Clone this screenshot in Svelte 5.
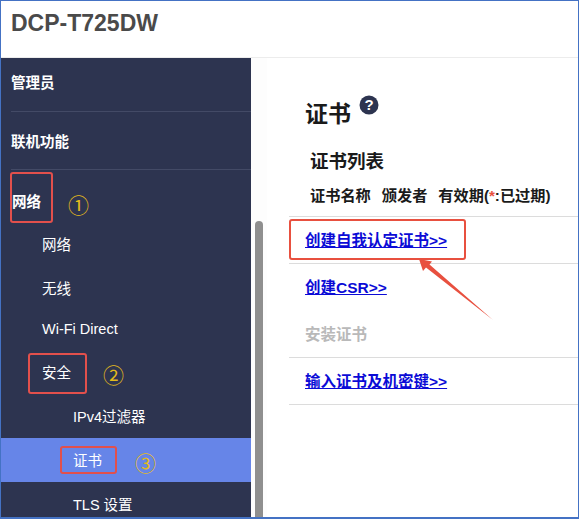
<script>
	const navItems = [
		{ label: '网络', level: 1, height: 44 },
		{ label: '无线', level: 1, height: 44 },
		{ label: 'Wi-Fi Direct', level: 1, height: 40 },
		{ label: '安全', level: 1, height: 44, mark: 'security' },
		{ label: 'IPv4过滤器', level: 2, height: 44 },
		{ label: '证书', level: 2, height: 44, active: true, mark: 'cert' },
		{ label: 'TLS 设置', level: 2, height: 44 }
	];

	const certRows = [
		{ label: '创建自我认定证书>>', link: true, callout: true },
		{ label: '创建CSR>>', link: true, noLine: true },
		{ label: '安装证书', link: false },
		{ label: '输入证书及机密键>>', link: true }
	];
</script>

<div class="frame">
	<header>
		<h1 class="model">DCP-T725DW</h1>
	</header>

	<div class="body">
		<nav>
			<div class="top-item ruled admin">管理员</div>
			<div class="top-item ruled">联机功能</div>
			<div class="top-item network">
				<span class="marked">
					网络
					<span class="box box-network"></span>
					<span class="num num-1">①</span>
				</span>
			</div>
			{#each navItems as item}
				<div
					class="nav-item"
					class:sub={item.level === 2}
					class:active={item.active}
					style="height: {item.height}px"
				>
					<span class="marked">
						{item.label}
						{#if item.mark === 'security'}
							<span class="box box-security"></span>
							<span class="num num-2">②</span>
						{:else if item.mark === 'cert'}
							<span class="box box-cert"></span>
							<span class="num num-3">③</span>
						{/if}
					</span>
				</div>
			{/each}
		</nav>

		<div class="track"><div class="thumb"></div></div>

		<main>
			<div class="title">
				<h2>证书</h2>
				<svg class="help" width="20" height="20" viewBox="0 0 20 20" aria-label="帮助">
					<circle cx="10" cy="10" r="9.5" fill="#2d3450" />
					<text x="10" y="15" text-anchor="middle" class="help-mark">?</text>
				</svg>
			</div>
			<h3>证书列表</h3>
			<div class="columns">
				<span>证书名称</span>
				<span>颁发者</span>
				<span>有效期(<i>*</i>:已过期)</span>
			</div>
			<div class="rows">
				{#each certRows as row}
					<div class="row" class:no-line={row.noLine}>
						{#if row.link}
							<a href="#top">{row.label}</a>
						{:else}
							<span class="disabled">{row.label}</span>
						{/if}
						{#if row.callout}
							<span class="box box-callout"></span>
							<svg class="arrow" width="80" height="64" viewBox="0 0 80 64">
								<path d="M2 1 L15 3.5 L12.5 6.5 L76 62 L9 9.5 L6 13 Z" fill="#e8503f" />
							</svg>
						{/if}
					</div>
				{/each}
			</div>
		</main>
	</div>
</div>

<style>
	:global(body) {
		margin: 0;
		background: #fff;
	}

	.frame {
		box-sizing: border-box;
		width: 579px;
		height: 519px;
		border: 1px solid #4472c4;
		border-bottom-width: 2px;
		overflow: hidden;
		font-family: 'Liberation Sans', 'Noto Sans CJK SC', sans-serif;
		display: flex;
		flex-direction: column;
	}

	header {
		height: 57px;
		flex: none;
		border-bottom: 1px solid #ececec;
		box-sizing: border-box;
		padding: 9px 0 0 10px;
	}
	.model {
		margin: 0;
		font-size: 23px;
		line-height: 26px;
		font-weight: 700;
		color: #4a4a4a;
	}

	.body {
		flex: 1;
		display: flex;
		min-height: 0;
	}

	nav {
		width: 250px;
		flex: none;
		background: #2d3450;
		color: #fff;
		font-size: 14.5px;
		overflow: hidden;
	}
	.top-item {
		box-sizing: border-box;
		margin-left: 10px;
		font-weight: 700;
		display: flex;
		align-items: center;
		height: 58px;
	}
	.admin {
		height: 54px;
		padding-bottom: 6px;
	}
	.ruled {
		border-bottom: 1px solid #434a66;
	}
	.network {
		height: 52px;
		padding-left: 1px;
		padding-top: 8px;
	}
	.nav-item {
		box-sizing: border-box;
		display: flex;
		align-items: center;
		padding-left: 41px;
		padding-bottom: 2px;
		flex: none;
	}
	.nav-item.sub {
		padding-left: 72px;
	}
	.nav-item.active {
		background: #6685e8;
	}

	.marked {
		position: relative;
		white-space: nowrap;
	}
	.box {
		position: absolute;
		box-sizing: border-box;
		border: 2px solid #e2504c;
		border-radius: 3px;
	}
	.box-network {
		left: -2px;
		top: -18px;
		width: 43px;
		height: 51px;
	}
	.box-security {
		left: -14px;
		top: -8px;
		width: 59px;
		height: 41px;
	}
	.box-cert {
		left: -13px;
		top: -3px;
		width: 57px;
		height: 28px;
	}
	.box-callout {
		left: -16px;
		top: -1px;
		width: 177px;
		height: 41px;
		border-color: #e8503f;
	}
	.num {
		position: absolute;
		font-size: 21px;
		line-height: 20px;
		font-weight: 400;
		color: #e3bb1c;
	}
	.num-1 {
		left: 56px;
		top: 6px;
	}
	.num-2 {
		left: 61px;
		top: 5px;
	}
	.num-3 {
		left: 62px;
		top: 5px;
	}

	.track {
		flex: none;
		width: 16px;
		position: relative;
		background: #fdfdfd;
	}
	.thumb {
		position: absolute;
		left: 4px;
		top: 163px;
		bottom: 0;
		width: 8px;
		background: #8f8f8f;
		border-radius: 4px 4px 0 0;
	}

	main {
		flex: 1;
		min-width: 0;
		padding: 37px 0 0 22px;
		color: #1a1a1a;
	}
	.title {
		display: flex;
		align-items: flex-start;
		gap: 8px;
		padding-left: 16px;
		height: 54px;
	}
	h2 {
		margin: 0;
		font-size: 23px;
		line-height: 30px;
		padding-top: 4px;
		font-weight: 700;
	}
	.help {
		margin-top: 0;
	}
	.help-mark {
		font-size: 15px;
		font-weight: 700;
		fill: #fff;
	}
	h3 {
		margin: 0 0 0 21px;
		font-size: 18.5px;
		line-height: 26px;
		font-weight: 700;
	}
	.columns {
		display: flex;
		gap: 11px;
		margin: 11px 0 0 21px;
		font-size: 15.2px;
		line-height: 20px;
		font-weight: 700;
		height: 30px;
		box-sizing: border-box;
	}
	.columns i {
		font-style: normal;
		color: #e8503f;
	}

	.rows {
		margin-left: 0;
		border-top: 1px solid #dcdcdc;
	}
	.row {
		box-sizing: border-box;
		height: 47px;
		padding-left: 16px;
		padding-bottom: 3px;
		display: flex;
		align-items: center;
		border-bottom: 1px solid #dcdcdc;
		position: relative;
		font-size: 15.5px;
		font-weight: 700;
	}
	.row.no-line {
		border-bottom: 0;
	}
	a {
		color: #0b0bd6;
		text-decoration: underline;
	}
	.disabled {
		color: #b9b9b9;
	}
	.row .box-callout {
		left: 0;
		top: 2px;
	}
	.arrow {
		position: absolute;
		left: 128px;
		top: 41px;
	}
</style>
